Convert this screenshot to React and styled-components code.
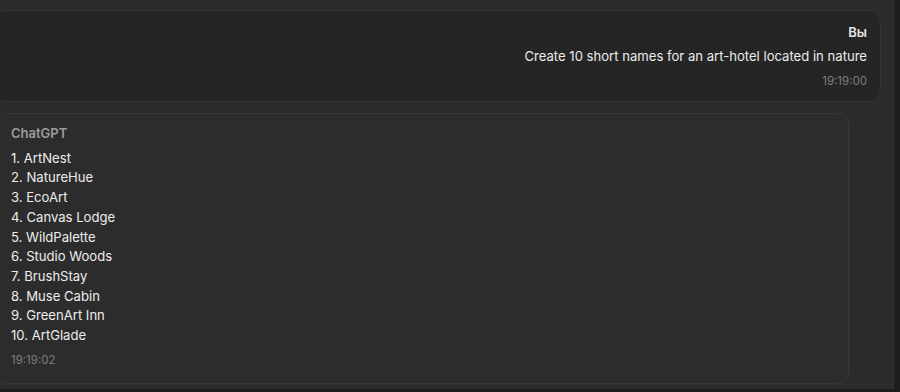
import React from "react";
import styled, { createGlobalStyle } from "styled-components";

const GlobalStyle = createGlobalStyle`
  html, body {
    margin: 0;
    padding: 0;
    background: #1c1c1c;
  }
  body {
    font-family: Inter, "Noto Sans", "Liberation Sans", sans-serif;
    -webkit-font-smoothing: antialiased;
  }
`;

const messages = [
  {
    id: 1,
    role: "user",
    author: "Вы",
    lines: ["Create 10 short names for an art-hotel located in nature"],
    time: "19:19:00",
  },
  {
    id: 2,
    role: "assistant",
    author: "ChatGPT",
    lines: [
      "1. ArtNest",
      "2. NatureHue",
      "3. EcoArt",
      "4. Canvas Lodge",
      "5. WildPalette",
      "6. Studio Woods",
      "7. BrushStay",
      "8. Muse Cabin",
      "9. GreenArt Inn",
      "10. ArtGlade",
    ],
    time: "19:19:02",
  },
];

function App() {
  return (
    <>
      <GlobalStyle />
      <Window>
        <ChatArea>
          <Thread>
            {messages.map((m) => (
              <Bubble key={m.id} role={m.role}>
                <Author role={m.role}>{m.author}</Author>
                <Body>
                  {m.lines.map((line) => (
                    <Line key={line}>{line}</Line>
                  ))}
                </Body>
                <Time>{m.time}</Time>
              </Bubble>
            ))}
          </Thread>
        </ChatArea>
        <ScrollTrack />
      </Window>
    </>
  );
}

export default App;

const Window = styled.div`
  display: flex;
  height: 389px;
  background: #2b2b2b;
  overflow: hidden;
`;

const ChatArea = styled.div`
  flex: 1;
  min-width: 0;
  padding: 10px 12px 0 0;
  border-right: 1px solid #303030;
`;

const Thread = styled.div`
  display: flex;
  flex-direction: column;
  gap: 11px;
  margin-left: -6px;
`;

const Bubble = styled.div`
  display: flex;
  flex-direction: column;
  box-sizing: border-box;
  border-radius: 12px;
  border: 1px solid ${({ role }) => (role === "user" ? "#333333" : "#363636")};
  background: ${({ role }) => (role === "user" ? "#252525" : "#2c2c2c")};
  align-items: ${({ role }) => (role === "user" ? "flex-end" : "flex-start")};
  text-align: ${({ role }) => (role === "user" ? "right" : "left")};
  width: ${({ role }) => (role === "user" ? "auto" : "855px")};
  padding: ${({ role }) =>
    role === "user" ? "11px 13px 12px 16px" : "9px 16px 15px 16px"};
  box-shadow: ${({ role }) =>
    role === "user" ? "none" : "5px 0 0 -4px #333333"};
`;

const Author = styled.div`
  font-size: 13px;
  line-height: 20px;
  font-weight: 600;
  color: ${({ role }) => (role === "user" ? "#e4e4e4" : "#9c9c9c")};
  margin-bottom: ${({ role }) => (role === "user" ? "5px" : "6px")};
`;

const Body = styled.div`
  display: flex;
  flex-direction: column;
`;

const Line = styled.div`
  font-size: 13.1px;
  line-height: 19.7px;
  color: #ececec;
`;

const Time = styled.div`
  font-size: 11.5px;
  line-height: 16px;
  color: #7c7c7c;
  margin-top: 6px;
`;

const ScrollTrack = styled.div`
  width: 6px;
  flex-shrink: 0;
  background: #1e1e1e;
`;
